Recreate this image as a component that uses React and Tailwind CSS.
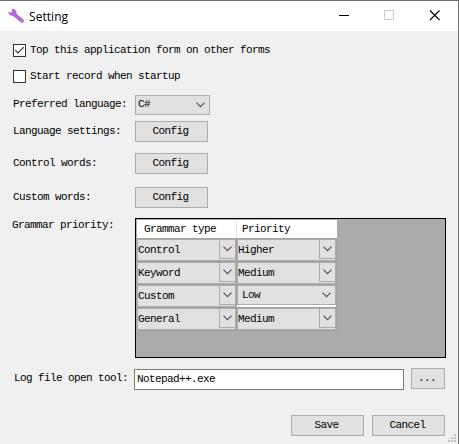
const GRAMMAR = [
  { type: "Control", priority: "Higher" },
  { type: "Keyword", priority: "Medium" },
  { type: "Custom", priority: "Low", editing: true },
  { type: "General", priority: "Medium" },
];

function Chevron() {
  return (
    <svg width="9" height="6" viewBox="0 0 9 6" fill="none" stroke="#555" strokeWidth="1.2" className="shrink-0">
      <path d="M0.5 0.7L4.5 4.7L8.5 0.7" />
    </svg>
  );
}

function Button({ children, className = "w-[73px]" }) {
  return (
    <button className={`flex h-[21px] shrink-0 items-center justify-center border border-[#adadad] bg-[#e1e1e1] pr-[2px] ${className}`}>
      {children}
    </button>
  );
}

function Check({ checked, children }) {
  return (
    <label className="flex h-[13px] items-center gap-1 pl-[13px]">
      <span className="flex size-[13px] border border-[#333] bg-white">
        {checked && (
          <svg width="11" height="11" viewBox="0 0 11 11" fill="none" stroke="#333" strokeWidth="1.2">
            <path d="M1.3 5.2L4 7.9L9.8 2.1" />
          </svg>
        )}
      </span>
      <span>{children}</span>
    </label>
  );
}

function Field({ label, className = "", children }) {
  return (
    <div className={`flex h-[21px] items-center ${className}`}>
      <span className="w-[122px] shrink-0">{label}</span>
      {children}
    </div>
  );
}

function ComboCell({ value, editing, className }) {
  if (editing) {
    return (
      <div className={`h-[23px] border-r border-b border-[#a0a0a0] ${className}`}>
        <div className="flex h-5 items-center justify-between border border-[#adadad] bg-[#e1e1e1] pr-[4px] pl-[4px]">
          <span>{value}</span>
          <Chevron />
        </div>
        <div className="h-[2px] bg-white" />
      </div>
    );
  }
  return (
    <div className={`h-[23px] border-r border-b border-[#a0a0a0] ${className}`}>
      <div className="flex h-[22px] border border-[#adadad] bg-[#e1e1e1]">
        <span className="flex-1 pt-[3px]">{value}</span>
        <span className="flex h-[19px] w-[16px] items-center justify-center border-b border-l border-[#adadad]">
          <Chevron />
        </span>
      </div>
    </div>
  );
}

export default function App() {
  return (
    <div className="relative flex h-[444px] w-[459px] flex-col overflow-hidden border-t border-r border-[#6e6e6e] bg-[#f0f0f0] font-['Liberation_Mono',monospace] text-[11px] leading-[15px] tracking-[-0.6px] whitespace-pre text-black">
      <header className="flex h-[30px] shrink-0 items-center bg-white pl-[8px]">
        <svg width="17" height="16" viewBox="0 0 17 16">
          <path d="M6 6.3L14 12.8" stroke="#b66ad9" strokeWidth="4" strokeLinecap="round" />
          <path d="M3.8 0.8L4.2 3.5L2.7 4.7L0.3 3.6C0.3 6.9 3.2 8.5 6 7.5L8.8 4.9C8.6 2.2 6.3 0.5 3.8 0.8Z" fill="#b66ad9" />
          <circle cx="14" cy="12.6" r="0.7" fill="#dcb5ec" />
        </svg>
        <h1 className="ml-[4px] flex-1 font-['Open_Sans',sans-serif] text-[12px] tracking-[0.05px]">Setting</h1>
        <svg width="102" height="12" viewBox="0 0 102 12" fill="none" className="mr-[17px]">
          <path d="M0 5.5H10" stroke="#000" />
          <rect x="45.5" y="0.5" width="9" height="9" stroke="#ccc" />
          <path d="M91 0.5L100.5 10M100.5 0.5L91 10" stroke="#000" strokeWidth="1.1" />
        </svg>
      </header>
      <main className="flex flex-col pt-[13px]">
        <Check checked>Top this application form on other forms</Check>
        <div className="mt-[13px]">
          <Check>Start record when startup</Check>
        </div>
        <Field label="Preferred language:" className="mt-[11px] pl-[13px]">
          <div className="flex h-5 w-[75px] items-center justify-between border border-[#adadad] bg-[#e1e1e1] pr-1 pl-[2px]">
            <span>C#</span>
            <Chevron />
          </div>
        </Field>
        <Field label="Language settings:" className="mt-[6px] pl-[13px]">
          <Button>Config</Button>
        </Field>
        <Field label="Control words:" className="mt-[11px] pl-[13px]">
          <Button>Config</Button>
        </Field>
        <Field label="Custom words:" className="mt-[13px] pl-[13px]">
          <Button>Config</Button>
        </Field>
        <section className="mt-[10px] flex">
          <span className="w-[135px] shrink-0 pl-[12px]">Grammar priority:</span>
          <div className="h-[140px] w-[311px] border border-black bg-[#ababab] p-px">
            <div className="flex h-[19px] w-[200px] border-b border-[#a0a0a0] bg-white pt-[2px]">
              <span className="w-[100px] border-r border-[#e0e0e0] pl-[7px]">Grammar type</span>
              <span className="pl-[5px]">Priority</span>
            </div>
            {GRAMMAR.map((row) => (
              <div key={row.type} className="flex">
                <ComboCell value={row.type} className="w-[100px]" />
                <ComboCell value={row.priority} editing={row.editing} className="w-[100px]" />
              </div>
            ))}
          </div>
        </section>
        <div className="mt-[10px] flex pl-[14px]">
          <span className="w-[120px] shrink-0 pt-[3px]">Log file open tool:</span>
          <div className="mt-px h-[21px] w-[270px] border border-[#7a7a7a] bg-white pt-[2px] pl-[2px]">Notepad++.exe</div>
          <div className="ml-[7px]">
            <Button className="w-[34px]">...</Button>
          </div>
        </div>
        <footer className="mt-[25px] flex justify-end gap-[8px] pr-[13px]">
          <Button>Save</Button>
          <Button>Cancel</Button>
        </footer>
      </main>
      <svg width="8" height="8" viewBox="0 0 8 8" fill="#bfbfbf" className="absolute right-[2px] bottom-[2px]">
        <path d="M6 0h2v2h-2zM3 3h2v2h-2zM6 3h2v2h-2zM0 6h2v2h-2zM3 6h2v2h-2zM6 6h2v2h-2z" />
      </svg>
    </div>
  );
}
